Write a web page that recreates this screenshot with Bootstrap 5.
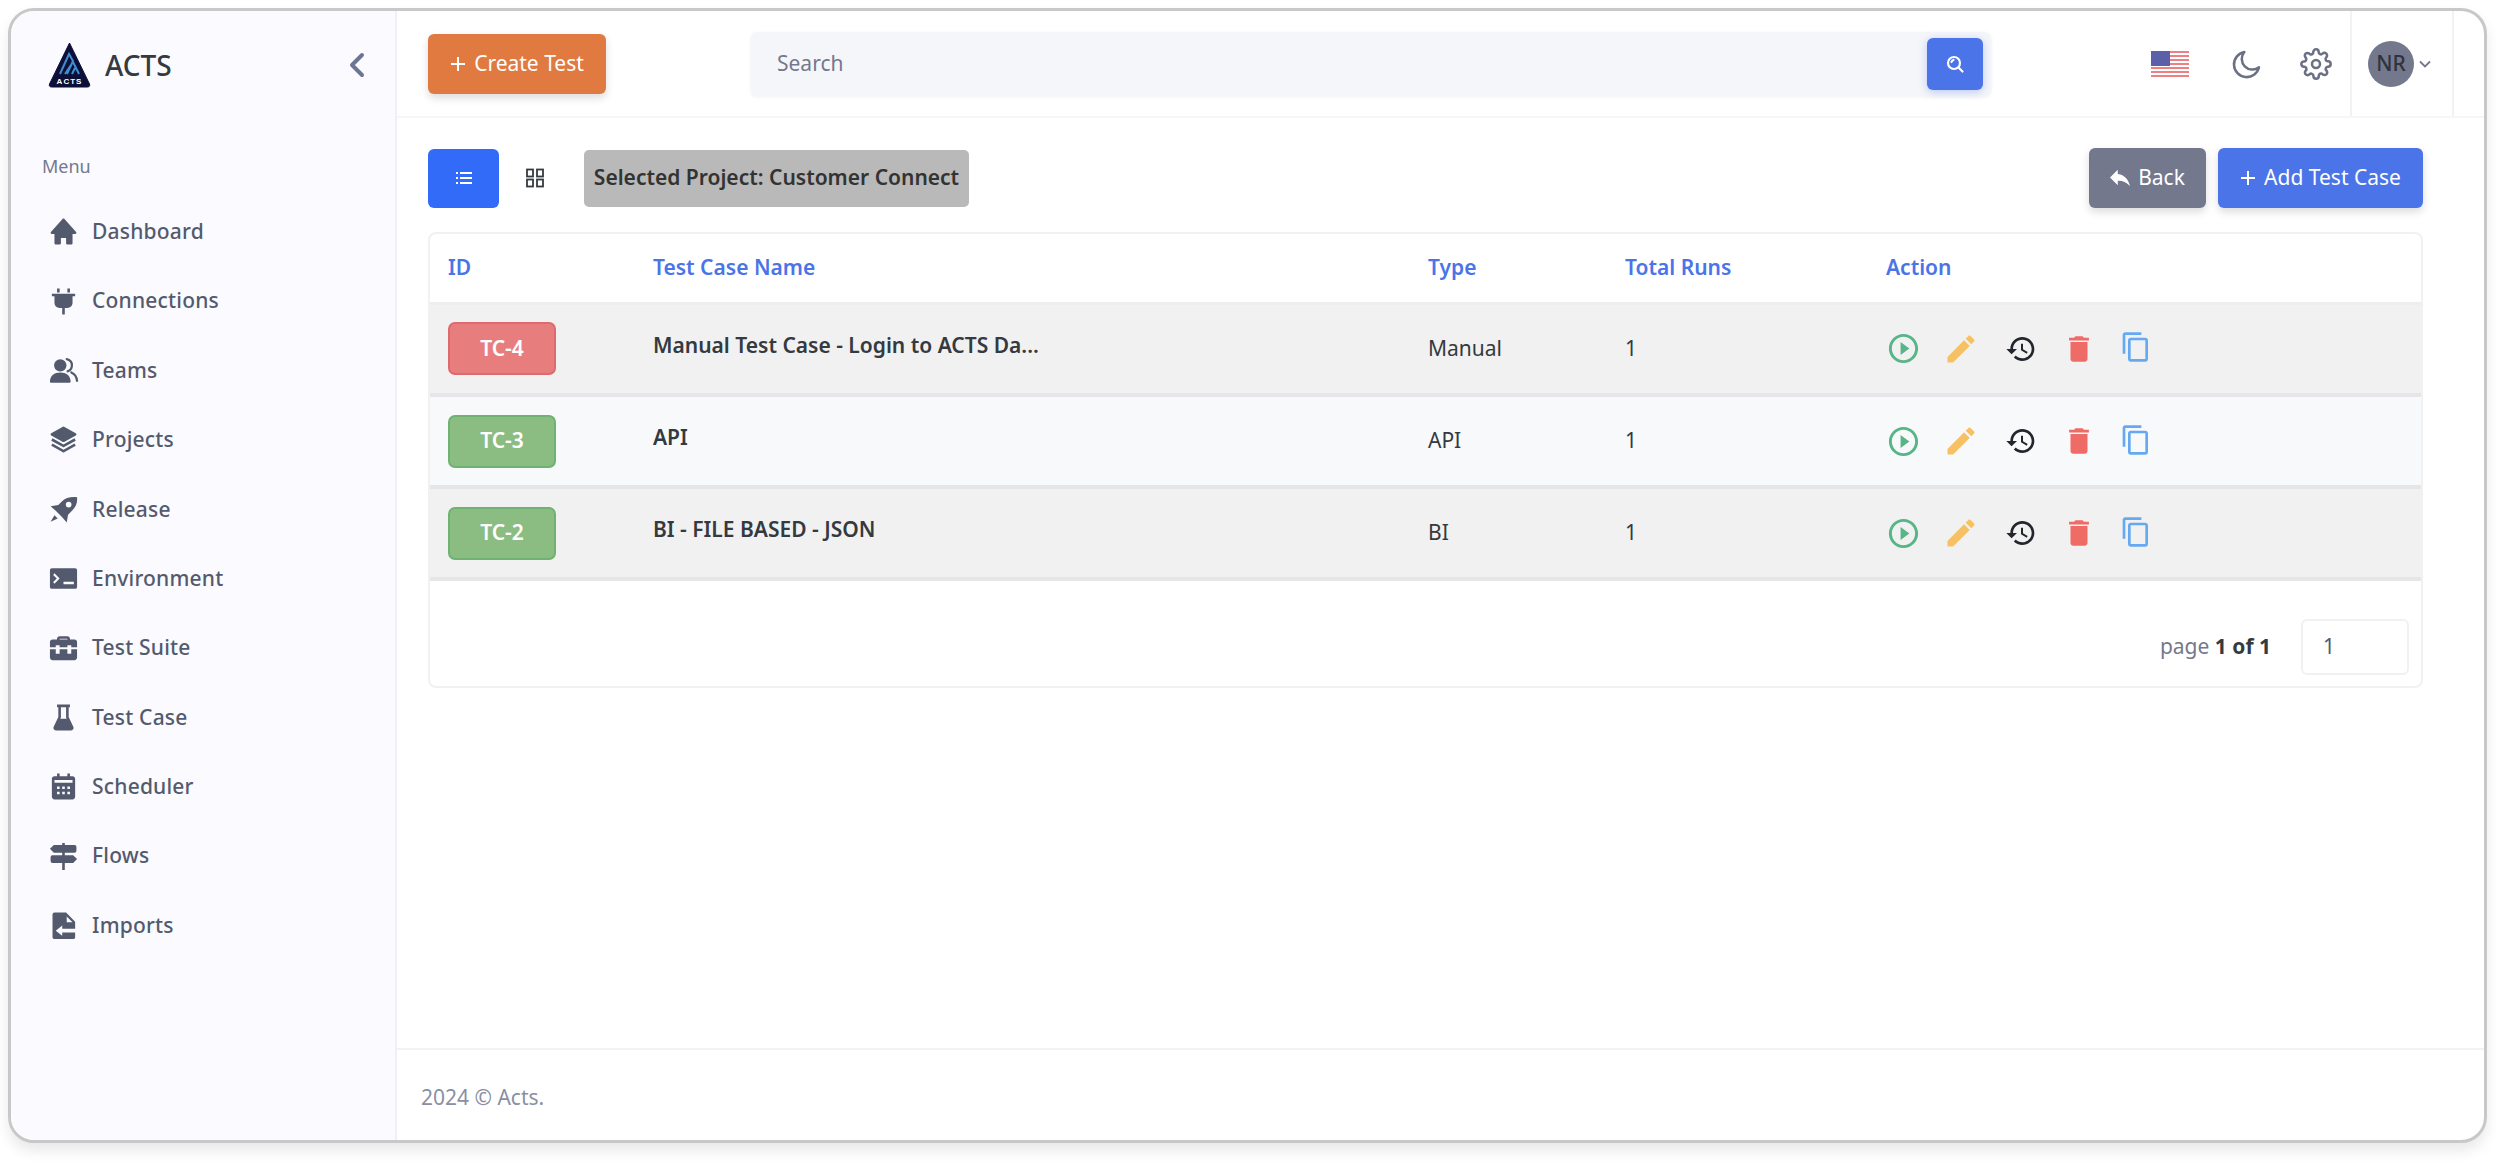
<!DOCTYPE html>
<html lang="en">
<head>
<meta charset="utf-8">
<title>ACTS - Test Cases</title>
<link href="https://cdn.jsdelivr.net/npm/bootstrap@5.3.0/dist/css/bootstrap.min.css" rel="stylesheet">
<style>
html,body{height:1165px;background:#fff;overflow:hidden}
body{font-family:"Noto Sans","Liberation Sans",sans-serif;font-size:21px;color:#343a40;padding:8px 9px 22px 8px}
.app-frame{height:100%;border:3px solid #c8c8c8;border-radius:26px;box-shadow:0 8px 14px rgba(0,0,0,.09);background:#fff;overflow:hidden}
.side-rail{width:386px;flex:none;background:#fafaff;border-right:2px solid #eff0f6}
.brand-row{height:107px;padding:0 30px 0 37px}
.brand-word{font-size:28px;font-weight:500;color:#343a40;margin-left:14px}
.rail-label{font-size:18px;color:#74788d;margin:32px 0 0 31px;line-height:32px}
.rail-nav{margin-top:15px}
.rail-link{height:69.4px;padding-left:37px;color:#545a6d;font-weight:500;font-size:21px;letter-spacing:.2px;text-decoration:none}
.rail-link svg{width:31px;height:31px;fill:#545a6d;margin-right:13px;flex:none}
.main-pane{min-width:0}
.top-strip{height:107px;flex:none;border-bottom:2px solid #f5f5fa;padding:0 30px 0 31px}
.act-btn{height:60px;border-radius:6px;color:#fff;font-size:21px;border:0;box-shadow:0 4px 8px rgba(0,0,0,.14);padding:0 20px;gap:8px}
.act-btn svg{fill:#fff}
.btn-orange{background:#e07a41;width:178px}
.btn-slate{background:#74788d;width:117px}
.btn-royal{background:#4a74e8;width:205px}
.btn-orange:hover,.btn-slate:hover,.btn-royal:hover{color:#fff}
.search-box{width:1240px;height:64px;margin-left:145px;background:#f5f6fa;border-radius:6px;padding:0 8px 0 24px;box-shadow:0 1px 4px rgba(0,0,0,.06)}
.search-box input{border:0;background:transparent;font-size:21px;color:#74788d;outline:0;flex:1;font-family:inherit}
.search-box input::placeholder{color:#74788d;opacity:1}
.search-btn{width:56px;height:52px;background:#4a74e8;border-radius:6px;border:0;box-shadow:0 2px 8px rgba(74,116,232,.35)}
.top-tools{margin-left:auto;align-self:stretch}
.flag-svg{width:38px;height:26px;margin-right:42px;margin-top:1px}
.moon-svg{width:32px;height:32px;margin-right:37px;stroke:#6c7084;fill:none;stroke-width:1.9}
.gear-svg{width:32px;height:32px;stroke:#6c7084;fill:none;stroke-width:1.9;margin-right:18px}
.user-cell{width:104px;border-left:2px solid #f1f1f6;border-right:2px solid #f1f1f6;padding-left:16px;gap:5px}
.user-disc{width:46px;height:46px;border-radius:50%;background:#74788d;color:#2f333d;font-size:21px;font-weight:500}
.page-body{padding:30px 61px 0 31px}
.tool-row{height:60px;margin-bottom:24px}
.view-btn{width:71px;height:59px;border-radius:6px;background:#316bf8}
.view-plain{width:71px;height:59px;margin-right:14px}
.proj-tag{height:57px;width:385px;background:#b9b9b9;border-radius:5px;font-weight:600;font-size:21px;color:#333;white-space:nowrap}
.data-card{border:2px solid #f1f1f4;border-radius:8px;background:#fff;overflow:hidden}
.data-table{table-layout:fixed;margin:0;--bs-table-border-color:transparent}
.col-a{width:205px}.col-b{width:775px}.col-c{width:197px}.col-d{width:261px}
.data-table th{height:69px;font-weight:600;color:#4a74e8;font-size:21px;vertical-align:middle;padding:0 0 0 18px;border:0;border-bottom:3px solid #eeeef0;white-space:nowrap}
.data-table td{height:92px;padding:0 0 0 18px;vertical-align:middle;border:0;border-bottom:4px solid #e6e6e8;font-size:21px;color:#343a40;white-space:nowrap}
.row-grey{--bs-table-bg:#f1f1f1}
.row-pale{--bs-table-bg:#f8f9fb}
.id-chip{width:108px;height:53px;border-radius:7px;color:#fff;font-weight:600;font-size:21px}
.chip-red{background:#e87d7d;border:2px solid #de6a6e}
.chip-green{background:#8bbc82;border:2px solid #70b272}
.case-name{font-weight:600;position:relative;top:-3px}
.ico-play{width:35px;height:35px;fill:#57b587}
.ico-pen{width:36px;height:36px;fill:#f6c165;margin-left:22px}
.ico-hist{width:32px;height:32px;fill:#23262d;margin-left:26px}
.ico-bin{width:34px;height:34px;fill:#ef6b66;margin-left:25px}
.ico-copy{width:32px;height:32px;fill:#64a9f2;margin-left:24px;margin-top:-3px}
.pager-row{height:105px;padding:26px 12px 0 0;gap:30px;color:#74788d}
.pager-row b{color:#343a40;font-weight:700}
.page-input{width:108px;height:56px;border:2px solid #f1f1f4;border-radius:6px;padding-left:20px;display:flex;align-items:center;color:#545a6d}
.foot-strip{height:92px;flex:none;border-top:2px solid #f1f1f6;padding:6px 0 0 24px;color:#8a8fa3;font-size:21px}
</style>
</head>
<body>
<svg class="d-none" aria-hidden="true">
  <symbol id="i-play" viewBox="0 0 24 24"><path d="M10 16.500l6-4.500-6-4.500v9zM12 2C6.480 2 2 6.480 2 12s4.480 10 10 10 10-4.480 10-10S17.520 2 12 2zm0 18c-4.410 0-8-3.590-8-8s3.590-8 8-8 8 3.590 8 8-3.590 8-8 8z"/></symbol>
  <symbol id="i-pen" viewBox="0 0 24 24"><path d="M20.710 7.040c.39-.39.39-1.040 0-1.410l-2.340-2.340c-.37-.39-1.020-.39-1.410 0l-1.840 1.830 3.750 3.750M3 17.250V21h3.750L17.810 9.930l-3.750-3.750L3 17.250z"/></symbol>
  <symbol id="i-hist" viewBox="0 0 24 24"><path d="M13 3c-4.970 0-9 4.030-9 9H1l3.890 3.890.07.14L9 12H6c0-3.870 3.130-7 7-7s7 3.130 7 7-3.130 7-7 7c-1.930 0-3.680-.79-4.940-2.060l-1.420 1.420C8.270 19.990 10.510 21 13 21c4.970 0 9-4.030 9-9s-4.030-9-9-9zm-1 5v5l4.280 2.540.72-1.210-3.500-2.080V8H12z"/></symbol>
  <symbol id="i-bin" viewBox="0 0 24 24"><path d="M6 19c0 1.100.9 2 2 2h8c1.100 0 2-.9 2-2V7H6v12zM19 4h-3.500l-1-1h-5l-1 1H5v2h14V4z"/></symbol>
  <symbol id="i-copy" viewBox="0 0 24 24"><path d="M16 1H4c-1.100 0-2 .9-2 2v14h2V3h12V1zm3 4H8c-1.100 0-2 .9-2 2v14c0 1.100.9 2 2 2h11c1.100 0 2-.9 2-2V7c0-1.100-.9-2-2-2zm0 16H8V7h11v14z"/></symbol>
</svg>
<div class="app-frame d-flex">
  <aside class="side-rail d-flex flex-column">
    <div class="brand-row d-flex align-items-center">
      <svg width="43" height="48" viewBox="0 0 43 48" role="img" aria-label="ACTS logo">
        <path d="M21.500 2 L41.500 43 Q42.500 46 39 46 H4 Q.5 46 1.500 43Z" fill="#0c0f38" stroke="#0c0f38" stroke-linejoin="round"/>
        <path d="M12 33 L21 13 L25 20 L19 33 M17 33 L25 21 L31 33 M24 33 L27 27" fill="none" stroke="#3f8fd0" stroke-width="2"/>
        <text x="21.500" y="43" text-anchor="middle" font-size="8" font-weight="700" fill="#fff" font-family="Liberation Sans" letter-spacing="1">ACTS</text>
      </svg>
      <span class="brand-word">ACTS</span>
      <svg class="ms-auto" width="16" height="26" viewBox="0 0 16 26" fill="none" stroke="#6c7593" stroke-width="4" stroke-linecap="round" stroke-linejoin="round"><path d="M13 3 3 13l10 10"/></svg>
    </div>
    <div class="rail-label">Menu</div>
    <nav class="rail-nav d-flex flex-column">
      <a class="rail-link d-flex align-items-center" href="#"><svg viewBox="0 0 24 24"><path d="m21.743 12.331-9-10c-.379-.422-1.107-.422-1.486 0l-9 10a.998.998 0 0 0-.17 1.076c.16.361.518.593.913.593h2v7a1 1 0 0 0 1 1h3a1 1 0 0 0 1-1v-4h4v4a1 1 0 0 0 1 1h3a1 1 0 0 0 1-1v-7h2a.998.998 0 0 0 .743-1.669z"/></svg>Dashboard</a>
      <a class="rail-link d-flex align-items-center" href="#"><svg viewBox="0 0 24 24"><path d="M3 8h2v5c0 2.206 1.794 4 4 4h2v5h2v-5h2c2.206 0 4-1.794 4-4V8h2V6H3v2zm4-6h2v3H7zm8 0h2v3h-2z"/></svg>Connections</a>
      <a class="rail-link d-flex align-items-center" href="#"><svg viewBox="0 0 24 24"><circle cx="9.500" cy="8" r="4.800"/><path d="M1.500 20.500c0-4.500 3.500-7 8-7s8 2.500 8 7c0 .6-.4 1-1 1h-14c-.6 0-1-.4-1-1z"/><path d="M14.500 3.200c2.500.5 4 2.500 4 4.800s-1.300 4-3.300 4.700M18 13.500c2.500 1 4.200 3.300 4.500 6.500" fill="none" stroke="#545a6d" stroke-width="1.700" stroke-linecap="round"/></svg>Teams</a>
      <a class="rail-link d-flex align-items-center" href="#"><svg viewBox="0 0 24 24"><path d="m21.484 7.125-9.022-5a1.003 1.003 0 0 0-.968 0l-8.978 4.960a1 1 0 0 0-.003 1.748l9.022 5.040a.995.995 0 0 0 .973.001l8.978-5a1 1 0 0 0-.002-1.749z"/><path d="m12 15.856-8.515-4.730-.971 1.748 9 5a1 1 0 0 0 .971 0l9-5-.971-1.748L12 15.856z"/><path d="m12 19.856-8.515-4.730-.971 1.748 9 5a1 1 0 0 0 .971 0l9-5-.971-1.748L12 19.856z"/></svg>Projects</a>
      <a class="rail-link d-flex align-items-center" href="#"><svg viewBox="0 0 24 24"><path fill-rule="evenodd" d="M22.500 2.500c-5-.5-9 .5-12 3.500L8 8.500 2 9.500 6 13l5 5 3.500 4 1-6 2.500-2.500c3-3 5-6 4.500-11zM16 6a2.200 2.200 0 1 1 0 4.400A2.200 2.200 0 0 1 16 6zM5 16.500l2.500 2.500L2 21.500z"/></svg>Release</a>
      <a class="rail-link d-flex align-items-center" href="#"><svg viewBox="0 0 24 24"><path fill-rule="evenodd" d="M3 4h18a1.500 1.500 0 0 1 1.500 1.500v13A1.500 1.500 0 0 1 21 20H3a1.500 1.500 0 0 1-1.500-1.500v-13A1.500 1.500 0 0 1 3 4zM5 8 4 9.300 6.800 12 4 14.700 5 16l4-4zM12 14.500v2h8v-2z"/></svg>Environment</a>
      <a class="rail-link d-flex align-items-center" href="#"><svg viewBox="0 0 24 24"><path d="M22.500 11V7c0-1.100-.9-2-2-2H17V4.500c0-1.100-.9-2-2-2H9c-1.100 0-2 .9-2 2V5H3.500c-1.100 0-2 .9-2 2v4H6V9.500h3V11h6V9.500h3V11zM15 5H9v-.6h6zM18 16h-3v-3.500H9V16H6v-3.500H1.500V19c0 1.100.9 2 2 2h17c1.100 0 2-.9 2-2v-6.500H18z"/></svg>Test Suite</a>
      <a class="rail-link d-flex align-items-center" href="#"><svg viewBox="0 0 24 24"><path d="M19.684 19.342 16 11.586V4h1V2H7v2h1v7.586L4.316 19.342A2 2 0 0 0 6 22h12a2 2 0 0 0 1.684-2.658zM10 4h4v8l.5 1h-5l.5-1z"/></svg>Test Case</a>
      <a class="rail-link d-flex align-items-center" href="#"><svg viewBox="0 0 24 24"><path d="M21 20V6c0-1.103-.897-2-2-2h-2V2h-2v2H9V2H7v2H5c-1.103 0-2 .897-2 2v14c0 1.103.897 2 2 2h14c1.103 0 2-.897 2-2zM9 18H7v-2h2v2zm0-4H7v-2h2v2zm4 4h-2v-2h2v2zm0-4h-2v-2h2v2zm4 4h-2v-2h2v2zm0-4h-2v-2h2v2zm2-5H5V7h14v2z"/></svg>Scheduler</a>
      <a class="rail-link d-flex align-items-center" href="#"><svg viewBox="0 0 24 24"><path d="M4.500 3h16a1.500 1.500 0 0 1 1.500 1.500v3A1.500 1.500 0 0 1 20.500 9h-16L1.500 6zM3.500 11h16l3 3-3 3h-16A1.500 1.500 0 0 1 2 15.500v-3A1.500 1.500 0 0 1 3.500 11zM11 1.500h2V3h-2zM11 9h2v2h-2zM11 17h2v5.500h-2z"/></svg>Flows</a>
      <a class="rail-link d-flex align-items-center" href="#"><svg viewBox="0 0 24 24"><path fill-rule="evenodd" d="M5 2h9l7 7v12a1.500 1.500 0 0 1-1.500 1.500H5A1.500 1.500 0 0 1 3.500 21V3.500A1.500 1.500 0 0 1 5 2zM14.500 5v4.500H19zM11 12l-5 4 5 4v-2.500h10v-3H11z"/></svg>Imports</a>
    </nav>
  </aside>
  <div class="main-pane d-flex flex-column flex-grow-1">
    <header class="top-strip d-flex align-items-center">
      <button class="btn act-btn btn-orange d-flex align-items-center justify-content-center" type="button"><svg width="16" height="16" viewBox="0 0 16 16"><path d="M7 1h2v6h6v2H9v6H7V9H1V7h6z"/></svg>Create Test</button>
      <div class="search-box d-flex align-items-center">
        <input type="text" placeholder="Search" aria-label="Search">
        <button class="search-btn d-flex align-items-center justify-content-center" type="button" aria-label="Search"><svg width="20" height="20" viewBox="0 0 20 20" fill="none" stroke="#fff" stroke-width="2.200" stroke-linecap="round"><circle cx="9" cy="9" r="6"/><path d="m13.500 13.500 4 4M6.500 8a3 3 0 0 1 2-2"/></svg></button>
      </div>
      <div class="top-tools d-flex align-items-center">
        <svg class="flag-svg" viewBox="0 0 38 26" role="img" aria-label="US flag">
          <rect width="38" height="26" fill="#fff"/>
          <path d="M0 1h38M0 5h38M0 9h38M0 13h38M0 17h38M0 21h38M0 25h38" stroke="#ee8084" stroke-width="2"/>
          <rect width="19" height="15" fill="#5b60a8"/>
        </svg>
        <svg class="moon-svg" viewBox="0 0 24 24" stroke-linecap="round" stroke-linejoin="round"><path d="M21 14.500A9.500 9.500 0 1 1 10 3a8 8 0 0 0 11 11.500z"/></svg>
        <svg class="gear-svg" viewBox="0 0 24 24" stroke-linecap="round" stroke-linejoin="round"><circle cx="12" cy="12" r="3"/><path d="M19.400 15a1.650 1.650 0 0 0 .33 1.820l.06.06a2 2 0 0 1 0 2.830 2 2 0 0 1-2.830 0l-.06-.06a1.650 1.650 0 0 0-1.820-.33 1.650 1.650 0 0 0-1 1.510V21a2 2 0 0 1-2 2 2 2 0 0 1-2-2v-.09A1.650 1.650 0 0 0 9 19.400a1.650 1.650 0 0 0-1.820.33l-.06.06a2 2 0 0 1-2.830 0 2 2 0 0 1 0-2.830l.06-.06a1.650 1.650 0 0 0 .33-1.820 1.650 1.650 0 0 0-1.510-1H3a2 2 0 0 1-2-2 2 2 0 0 1 2-2h.09A1.650 1.650 0 0 0 4.600 9a1.650 1.650 0 0 0-.33-1.820l-.06-.06a2 2 0 0 1 0-2.830 2 2 0 0 1 2.830 0l.06.06a1.650 1.650 0 0 0 1.820.33H9a1.650 1.650 0 0 0 1-1.510V3a2 2 0 0 1 2-2 2 2 0 0 1 2 2v.09a1.650 1.650 0 0 0 1 1.510 1.650 1.650 0 0 0 1.820-.33l.06-.06a2 2 0 0 1 2.830 0 2 2 0 0 1 0 2.830l-.06.06a1.650 1.650 0 0 0-.33 1.820V9a1.650 1.650 0 0 0 1.510 1H21a2 2 0 0 1 2 2 2 2 0 0 1-2 2h-.09a1.650 1.650 0 0 0-1.510 1z"/></svg>
        <div class="user-cell d-flex align-items-center align-self-stretch">
          <span class="user-disc d-flex align-items-center justify-content-center">NR</span>
          <svg width="12" height="8" viewBox="0 0 12 8" fill="none" stroke="#74788d" stroke-width="1.800"><path d="m1 1.500 5 5 5-5"/></svg>
        </div>
      </div>
    </header>
    <main class="page-body flex-grow-1">
      <div class="tool-row d-flex align-items-center">
        <span class="view-btn d-flex align-items-center justify-content-center"><svg width="18" height="16" viewBox="0 0 18 16" fill="#fff"><path d="M1 2h2v2H1zM5 2h12v2H5zM1 7h2v2H1zM5 7h12v2H5zM1 12h2v2H1zM5 12h12v2H5z"/></svg></span>
        <span class="view-plain d-flex align-items-center justify-content-center"><svg width="18" height="20" viewBox="0 0 18 20" fill="none" stroke="#343a40" stroke-width="1.800"><rect x="1" y="1.500" width="6" height="7"/><rect x="11" y="1.500" width="6" height="7"/><rect x="1" y="11.500" width="6" height="7"/><rect x="11" y="11.500" width="6" height="7"/></svg></span>
        <span class="proj-tag d-flex align-items-center justify-content-center">Selected Project: Customer Connect</span>
        <button class="btn act-btn btn-slate d-flex align-items-center justify-content-center ms-auto me-2" type="button"><svg width="20" height="18" viewBox="3 5 18 15"><path d="M10 9V5l-7 7 7 7v-4.100c5 0 8.500 1.600 11 5.100-1-5-4-10-11-11z"/></svg>Back</button>
        <button class="btn act-btn btn-royal d-flex align-items-center justify-content-center ms-1" type="button"><svg width="16" height="16" viewBox="0 0 16 16"><path d="M7 1h2v6h6v2H9v6H7V9H1V7h6z"/></svg>Add Test Case</button>
      </div>
      <section class="data-card">
        <table class="table data-table">
          <colgroup><col class="col-a"><col class="col-b"><col class="col-c"><col class="col-d"><col></colgroup>
          <thead><tr><th>ID</th><th>Test Case Name</th><th>Type</th><th>Total Runs</th><th>Action</th></tr></thead>
          <tbody>
            <tr class="row-grey"><td><span class="id-chip chip-red d-flex align-items-center justify-content-center">TC-4</span></td><td><span class="case-name">Manual Test Case - Login to ACTS Da...</span></td><td>Manual</td><td>1</td><td>
              <div class="d-flex align-items-center"><svg class="ico-play"><use href="#i-play"/></svg><svg class="ico-pen"><use href="#i-pen"/></svg><svg class="ico-hist"><use href="#i-hist"/></svg><svg class="ico-bin"><use href="#i-bin"/></svg><svg class="ico-copy"><use href="#i-copy"/></svg></div></td></tr>
            <tr class="row-pale"><td><span class="id-chip chip-green d-flex align-items-center justify-content-center">TC-3</span></td><td><span class="case-name">API</span></td><td>API</td><td>1</td><td>
              <div class="d-flex align-items-center"><svg class="ico-play"><use href="#i-play"/></svg><svg class="ico-pen"><use href="#i-pen"/></svg><svg class="ico-hist"><use href="#i-hist"/></svg><svg class="ico-bin"><use href="#i-bin"/></svg><svg class="ico-copy"><use href="#i-copy"/></svg></div></td></tr>
            <tr class="row-grey"><td><span class="id-chip chip-green d-flex align-items-center justify-content-center">TC-2</span></td><td><span class="case-name">BI - FILE BASED - JSON</span></td><td>BI</td><td>1</td><td>
              <div class="d-flex align-items-center"><svg class="ico-play"><use href="#i-play"/></svg><svg class="ico-pen"><use href="#i-pen"/></svg><svg class="ico-hist"><use href="#i-hist"/></svg><svg class="ico-bin"><use href="#i-bin"/></svg><svg class="ico-copy"><use href="#i-copy"/></svg></div></td></tr>
          </tbody>
        </table>
        <div class="pager-row d-flex align-items-center justify-content-end">
          <span>page <b>1 of 1</b></span>
          <span class="page-input">1</span>
        </div>
      </section>
    </main>
    <footer class="foot-strip d-flex align-items-center">2024 © Acts.</footer>
  </div>
</div>
</body>
</html>
